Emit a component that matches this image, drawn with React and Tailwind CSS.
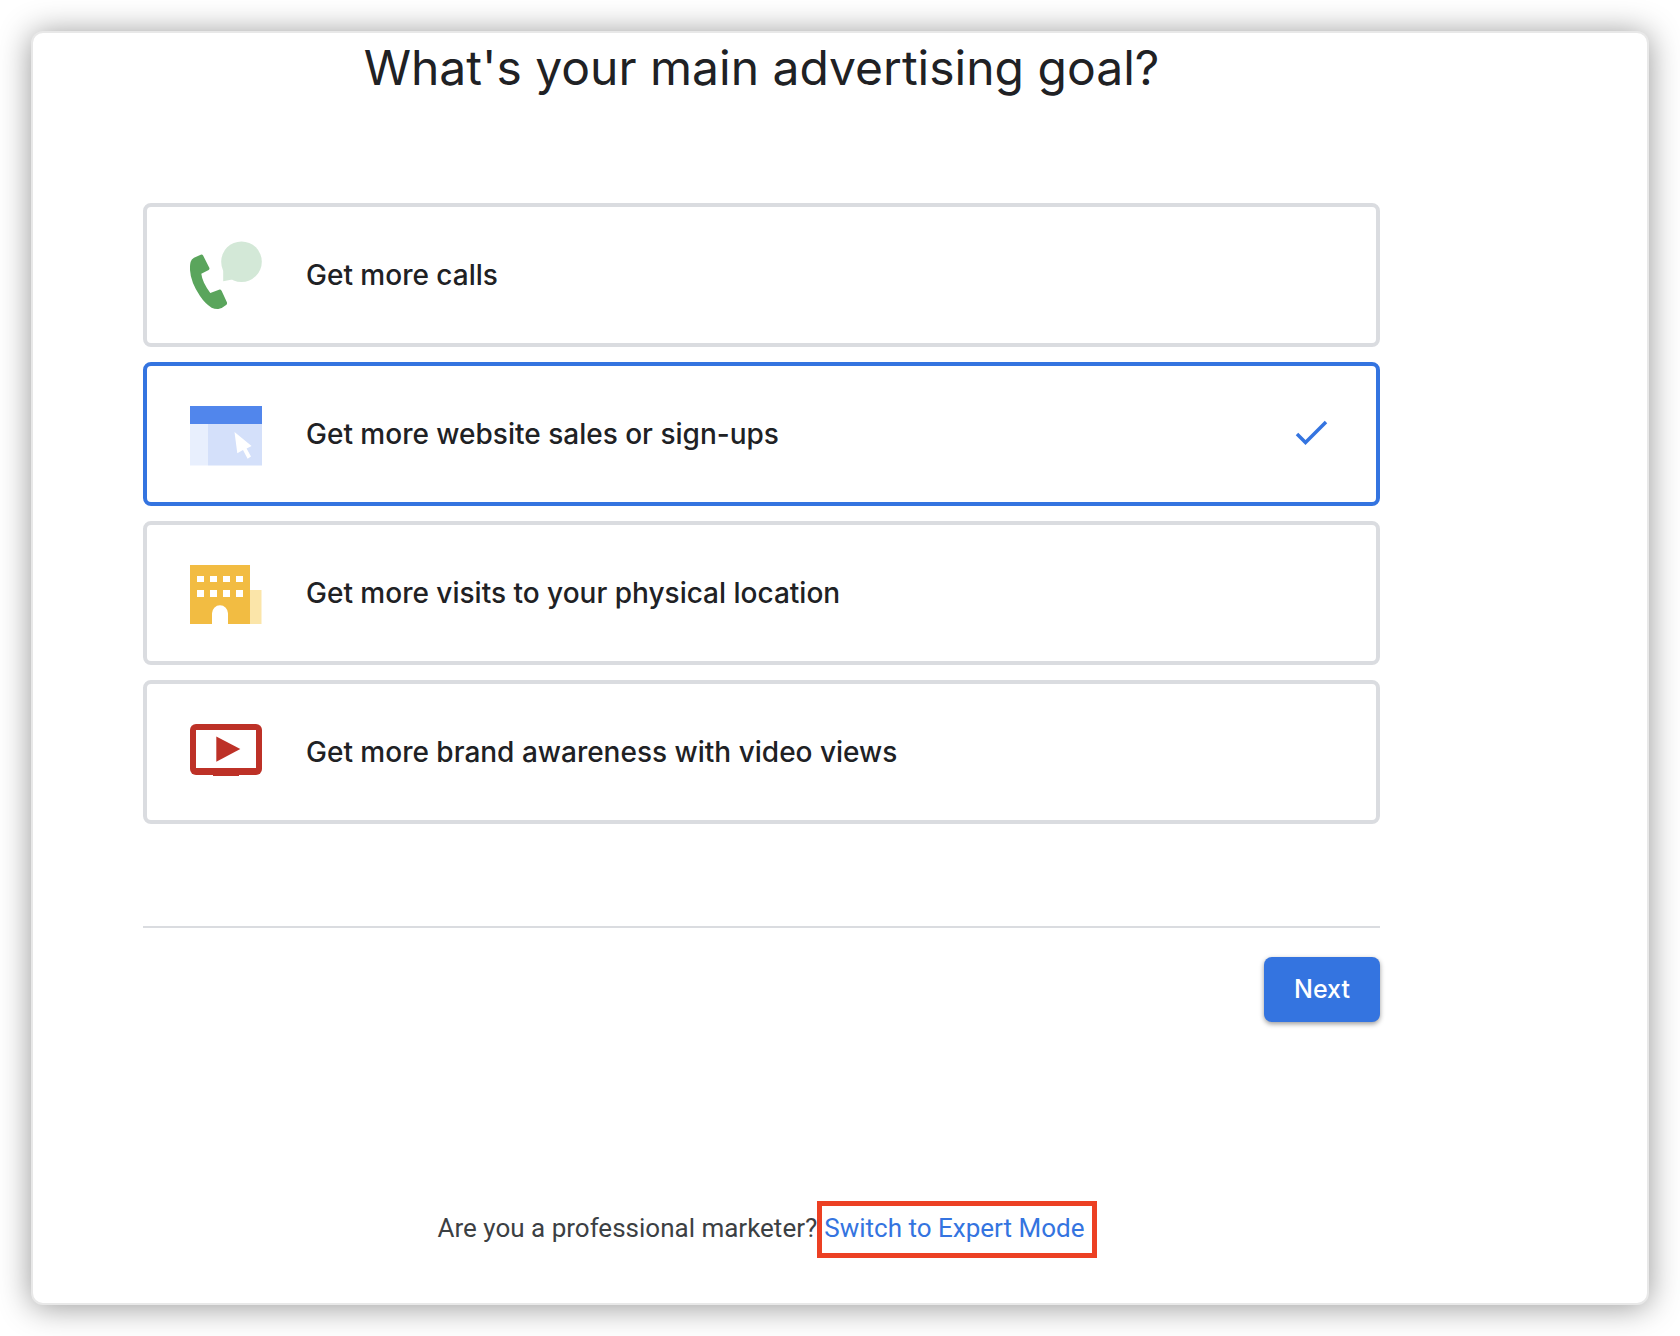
import React, { useState } from "react";

function CallsIcon() {
  return (
    <svg className="w-18 h-18 shrink-0" viewBox="0 0 72 72" aria-hidden="true">
      <circle cx="51.500" cy="22.700" r="20.300" fill="#d3e8d7" />
      <path d="M33.200 29v13.300l9-1.800z" fill="#d3e8d7" />
      <path
        d="M4 18.700l6.700-3q1.600-.6 2.400.8l6.200 12.200q.6 1.400-.6 2.200l-7.400 3.800q.6 4.600 2.700 9t6.300 10.300l8.700-3.300q1.800-.4 2.700 1.200l5.200 11.400q.6 1.600-.8 2.700-3.400 3-7.800 4-3.600.2-6.700-1.300Q15 64.500 10 57 .6 43 0 31q-.2-5 .6-8 .8-2.800 3.400-4.300z"
        fill="#5aa55c"
      />
    </svg>
  );
}

function WebsiteIcon() {
  return (
    <svg className="w-18 h-18 shrink-0" viewBox="0 0 72 72" aria-hidden="true">
      <path d="M0 8h72v18H0z" fill="#5186ec" />
      <path d="M0 26h18v41.500H0z" fill="#e8effd" />
      <path d="M18 26h54v41.500H18z" fill="#d4e0fa" />
      <path d="M44.500 34L61.600 48l-5 2.400 4.400 8-3.400 2.300-4.600-8.700-5.700 3.300z" fill="#fff" />
    </svg>
  );
}

function LocationIcon() {
  const columns = [7, 20, 33, 46];
  return (
    <svg className="w-18 h-18 shrink-0" viewBox="0 0 72 72" aria-hidden="true">
      <path d="M0 8h60v59H0z" fill="#f2bc42" />
      <path d="M60 33h11.500v34H60z" fill="#fbe5a9" />
      {columns.map((x) => (
        <g key={x} fill="#fff">
          <rect x={x} y="19" width="7" height="6" />
          <rect x={x} y="33" width="7" height="7" />
        </g>
      ))}
      <path d="M22 67V56.300a8 8 0 0 1 16 0V67z" fill="#fff" />
    </svg>
  );
}

function VideoIcon() {
  return (
    <svg className="w-18 h-18 shrink-0" viewBox="0 0 72 72" aria-hidden="true">
      <rect y="8" width="72" height="51" rx="6" fill="#bd3127" />
      <path d="M23 58h26v2H23z" fill="#bd3127" />
      <path d="M6 14h60v38H6z" fill="#fff" />
      <path d="M26.300 20.500l24 12.600-24 12.700z" fill="#bd3127" />
    </svg>
  );
}

const goals = [
  { id: "calls", label: "Get more calls", Icon: CallsIcon },
  { id: "website", label: "Get more website sales or sign-ups", Icon: WebsiteIcon },
  { id: "visits", label: "Get more visits to your physical location", Icon: LocationIcon },
  { id: "video", label: "Get more brand awareness with video views", Icon: VideoIcon },
];

export default function App() {
  const [selected, setSelected] = useState("website");

  return (
    <div className="min-h-screen bg-white p-[31px] font-['Inter',sans-serif] text-[#202124]">
      <main className="rounded-xl border-2 border-[#e8e8e8] bg-white pt-1 pb-[45px] pl-[110px] pr-[267px] shadow-[0_2px_32px_rgba(0,0,0,0.42)]">
        <h1 id="goal-title" className="text-center text-[48px] leading-[62px] font-normal">
          What's your main advertising goal?
        </h1>

        <form onSubmit={(e) => e.preventDefault()}>
          {/* Goal options */}
          <fieldset aria-labelledby="goal-title" className="mt-[104px] flex flex-col gap-[15px]">
            {goals.map(({ id, label, Icon }) => (
              <label
                key={id}
                className={`flex h-36 cursor-pointer items-center gap-11 rounded-lg border-4 pl-[43px] pr-[47px] ${
                  selected === id ? "border-[#3474e0]" : "border-[#dadce0]"
                }`}
              >
                <input
                  type="radio"
                  name="goal"
                  value={id}
                  checked={selected === id}
                  onChange={() => setSelected(id)}
                  className="sr-only"
                />
                <Icon />
                <span className="flex-1 text-[28px] leading-9 font-medium">{label}</span>
                {selected === id && (
                  <svg className="w-9 h-9" viewBox="0 0 36 36" fill="none" aria-hidden="true">
                    <path d="M4 18l8.500 8.500L33 6" stroke="#3474e0" strokeWidth="3.500" />
                  </svg>
                )}
              </label>
            ))}
          </fieldset>

          <div className="mt-[102px] flex justify-end border-t-2 border-[#dadce0] pt-[29px]">
            <button
              type="submit"
              className="h-[65px] rounded-lg bg-[#3474e0] px-[30px] text-[25px] font-medium text-white shadow-[0_2px_5px_rgba(0,0,0,0.4)]"
            >
              Next
            </button>
          </div>
        </form>

        {/* Expert mode link */}
        <p className="mt-[179px] -mr-3 flex items-baseline justify-center font-['Roboto',sans-serif] text-[26px] leading-8 text-[#3c4043]">
          <span>Are you a professional marketer?</span>
          <a
            href="#expert"
            className="border-[5px] border-[#ec4023] pt-[6px] pr-2 pb-[9px] pl-[2px] text-[#3474e0]"
          >
            Switch to Expert Mode
          </a>
        </p>
      </main>
    </div>
  );
}
